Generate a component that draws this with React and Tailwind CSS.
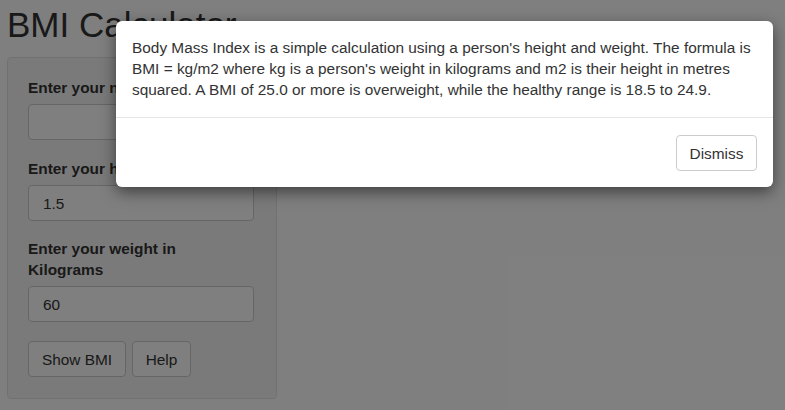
export default function App() {
  const font = { fontFamily: '"Liberation Sans", Arial, sans-serif' };
  return (
    <div className="relative w-[785px] h-[410px] overflow-hidden bg-white text-[#333] text-[15.4px] leading-[21px] font-['Liberation_Sans',Arial,sans-serif]">
      {/* Page */}
      <div className="pl-[7px] pt-[6px]">
        <h2 className="text-[35px] leading-[38px] font-normal text-[#333] mb-[13px]">BMI Calculator</h2>
        <div className="w-[270px] bg-[#f5f5f5] border border-[#e3e3e3] rounded-[4px] pt-[19px] pb-[21px] px-[20px]">
          <div className="mb-[18px]">
            <label className="block font-bold mb-[6px]">Enter your name</label>
            <div className="h-[36px] w-[226px] bg-white border border-[#ccc] rounded-[4px]"></div>
          </div>
          <div className="mb-[17px]">
            <label className="block font-bold mb-[6px]">Enter your height in Metres</label>
            <div className="h-[36px] w-[226px] bg-white border border-[#ccc] rounded-[4px] px-[14px] flex items-center">1.5</div>
          </div>
          <div className="mb-[19px]">
            <label className="block font-bold mb-[6px] w-[180px]">Enter your weight in Kilograms</label>
            <div className="h-[36px] w-[226px] bg-white border border-[#ccc] rounded-[4px] px-[14px] flex items-center">60</div>
          </div>
          <div className="flex gap-[6px]">
            <button className="h-[36px] w-[98px] bg-white border border-[#ccc] rounded-[4px]">Show BMI</button>
            <button className="h-[36px] w-[59px] bg-white border border-[#ccc] rounded-[4px]">Help</button>
          </div>
        </div>
      </div>

      {/* Backdrop */}
      <div className="absolute inset-0 bg-black/50"></div>

      {/* Modal */}
      <div className="absolute left-[116px] top-[21px] w-[657px] bg-white rounded-[6px] shadow-[0_5px_15px_rgba(0,0,0,0.5)]" style={font}>
        <div className="px-[16px] pt-[16px] pb-[16px] h-[96px]">
          Body Mass Index is a simple calculation using a person's height and weight. The formula is BMI = kg/m2 where kg is a person's weight in kilograms and m2 is their height in metres squared. A BMI of 25.0 or more is overweight, while the healthy range is 18.5 to 24.9.
        </div>
        <div className="border-t border-[#e5e5e5] flex justify-end px-[16px] pt-[17px] pb-[16px]">
          <button className="h-[36px] w-[81px] bg-white border border-[#ccc] rounded-[4px] text-[#333]">Dismiss</button>
        </div>
      </div>
    </div>
  );
}
